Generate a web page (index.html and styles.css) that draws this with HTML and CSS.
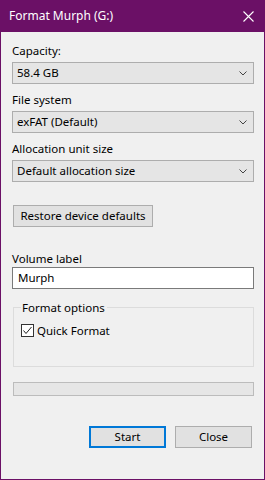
FILE: index.html
```html
<!DOCTYPE html>
<html>
<head>
<meta charset="utf-8">
<link rel="stylesheet" href="styles.css">
</head>
<body>
<div class="window">
  <div class="titlebar">
    <span class="title">Format Murph (G:)</span>
    <svg class="close-x" width="11" height="11" viewBox="0 0 11 11"><path d="M0.5 0.5 L10.5 10.5 M10.5 0.5 L0.5 10.5" stroke="#fff" stroke-width="1.1" fill="none"/></svg>
  </div>
  <div class="content">
    <div class="field">
      <div class="label">Capacity:</div>
      <div class="combo"><span>58.4 GB</span><svg class="chev" width="8" height="5" viewBox="0 0 8 5"><path d="M0.5 0.5 L4 4 L7.5 0.5" stroke="#444" stroke-width="1" fill="none"/></svg></div>
    </div>
    <div class="field">
      <div class="label">File system</div>
      <div class="combo"><span>exFAT (Default)</span><svg class="chev" width="8" height="5" viewBox="0 0 8 5"><path d="M0.5 0.5 L4 4 L7.5 0.5" stroke="#444" stroke-width="1" fill="none"/></svg></div>
    </div>
    <div class="field">
      <div class="label">Allocation unit size</div>
      <div class="combo"><span>Default allocation size</span><svg class="chev" width="8" height="5" viewBox="0 0 8 5"><path d="M0.5 0.5 L4 4 L7.5 0.5" stroke="#444" stroke-width="1" fill="none"/></svg></div>
    </div>
    <div class="restore-row"><button class="btn restore">Restore device defaults</button></div>
    <div class="label vol-label">Volume label</div>
    <div class="textbox">Murph</div>
    <div class="group">
      <span class="legend">Format options</span>
      <div class="check-row">
        <svg class="checkbox" width="13" height="13" viewBox="0 0 13 13"><rect x="0.5" y="0.5" width="12" height="12" fill="#fff" stroke="#333"/><path d="M2.5 6.5 L5 9.5 L10.5 3" stroke="#222" stroke-width="1" fill="none"/></svg>
        <span>Quick Format</span>
      </div>
    </div>
    <div class="progress"></div>
    <div class="buttons">
      <button class="btn action default">Start</button>
      <button class="btn action">Close</button>
    </div>
  </div>
</div>
</body>
</html>
```
FILE: styles.css
```css
* { box-sizing: border-box; }
html, body { margin: 0; padding: 0; }
body {
  font-family: "Noto Sans", "Open Sans", sans-serif;
  font-size: 11.5px;
  color: #000;
  background: #f0f0f0;
}
.window {
  width: 265px;
  height: 480px;
  border: 1px solid #6b1066;
  border-top: none;
  background: #f0f0f0;
  display: flex;
  flex-direction: column;
}
.titlebar {
  height: 32px;
  background: #6b1066;
  color: #fff;
  display: flex;
  align-items: center;
  justify-content: space-between;
  padding: 0 11px 0 9px;
  margin: 0 -1px;
  flex: none;
}
.title { font-size: 12px; line-height: 16px; }
.close-x { display: block; }
.content {
  padding: 11px 10px 0 11px;
  display: flex;
  flex-direction: column;
}
.field { margin-bottom: 8px; }
.label { line-height: 15px; height: 15px; margin-bottom: 4px; }
.combo {
  height: 22px;
  background: #e5e5e5;
  border: 1px solid #adadad;
  display: flex;
  align-items: center;
  justify-content: space-between;
  padding: 0 6px 0 4px;
}
.combo span { line-height: 16px; }
.chev { display: block; margin-top: 1px; }
.restore-row { margin-top: 15px; display: flex; }
.btn {
  font-family: inherit;
  font-size: 11.5px;
  color: #000;
  background: #e1e1e1;
  border: 1px solid #adadad;
  height: 22px;
  padding: 0;
  margin: 0;
  line-height: 16px;
}
.restore { width: 140px; margin-left: 1px; }
.vol-label { margin-top: 24px; margin-bottom: 1px; }
.textbox {
  height: 22px;
  background: #fff;
  border: 1px solid #7a7a7a;
  padding: 0 5px;
  line-height: 20px;
}
.group {
  margin-top: 18px;
  margin-left: 1px;
  height: 60px;
  border: 1px solid #dcdcdc;
  padding: 0 0 0 7px;
}
.legend {
  display: inline-block;
  background: #f0f0f0;
  padding: 0 2px 0 1px;
  line-height: 15px;
  margin-top: -8px;
  vertical-align: top;
}
.check-row {
  display: flex;
  align-items: center;
  gap: 3px;
  margin-top: 0;
}
.checkbox { display: block; }
.progress {
  margin-top: 15px;
  margin-left: 1px;
  height: 14px;
  background: #e6e6e6;
  border: 1px solid #bcbcbc;
}
.buttons {
  margin-top: 30px;
  display: flex;
  justify-content: flex-end;
  gap: 9px;
  padding-right: 2px;
}
.action { width: 77px; }
.default { border: 2px solid #0078d7; }
```
